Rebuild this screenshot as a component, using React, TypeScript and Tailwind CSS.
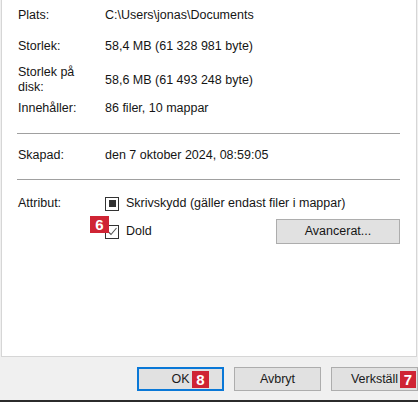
const rows = [
  { label: 'Plats:', value: 'C:\\Users\\jonas\\Documents' },
  { label: 'Storlek:', value: '58,4 MB (61 328 981 byte)' },
];

function Badge({ n, className }: { n: string; className: string }) {
  return (
    <span
      className={`absolute flex items-center justify-center bg-[#cf2434] text-white font-bold text-[15px] leading-none ${className}`}
    >
      {n}
    </span>
  );
}

function Button({ label, primary }: { label: string; primary?: boolean }) {
  return (
    <div
      className={`h-[24px] w-[87px] flex items-center justify-center bg-[#e1e1e1] text-[12.5px] text-[#1a1a1a] ${
        primary ? 'border-2 border-[#0a78d7]' : 'border border-[#adadad]'
      }`}
    >
      {label}
    </div>
  );
}

export default function App() {
  return (
    <div
      className="w-[418px] h-[402px] bg-[#f0f0f0] flex flex-col overflow-hidden text-[12.5px] leading-[15px] text-[#151515]"
      style={{ fontFamily: '"Liberation Sans", Arial, sans-serif' }}
    >
      {/* panel */}
      <div className="ml-[1px] w-[416px] h-[357px] shrink-0 bg-white border-x border-b border-[#d6d6d6] pl-[16px] pr-[16px] pt-[8px]">
        <div className="flex flex-col">
          {rows.map((r, i) => (
            <div key={r.label} className={`flex ${i > 0 ? 'mt-[16px]' : ''}`}>
              <div className="w-[87px] shrink-0">{r.label}</div>
              <div>{r.value}</div>
            </div>
          ))}
          <div className="flex items-center mt-[11px]">
            <div className="w-[87px] shrink-0">
              Storlek på
              <br />
              disk:
            </div>
            <div className="pt-[1px]">58,6 MB (61 493 248 byte)</div>
          </div>
          <div className="flex mt-[6px]">
            <div className="w-[87px] shrink-0">Innehåller:</div>
            <div>86 filer, 10 mappar</div>
          </div>
        </div>

        <div className="h-px bg-[#a0a0a0] mt-[17px] -ml-[1px]" />

        <div className="flex mt-[14px]">
          <div className="w-[87px] shrink-0">Skapad:</div>
          <div>den 7 oktober 2024, 08:59:05</div>
        </div>

        <div className="h-px bg-[#a0a0a0] mt-[16px] -ml-[1px]" />

        <div className="flex mt-[16px]">
          <div className="w-[87px] shrink-0">Attribut:</div>
          <div className="flex flex-col flex-1">
            <div className="flex items-center gap-[7px]">
              <div className="w-[14px] h-[14px] border-[1.5px] border-[#333] flex items-center justify-center">
                <div className="w-[7px] h-[7px] bg-[#333]" />
              </div>
              <span>Skrivskydd (gäller endast filer i mappar)</span>
            </div>
            <div className="flex items-center mt-[8px] relative">
              <div className="flex items-center gap-[7px] flex-1">
                <div className="w-[14px] h-[14px] border-[1.5px] border-[#333] flex items-center justify-center">
                  <svg width="11" height="11" viewBox="0 0 11 11">
                    <path d="M1.5 6 L4 8.5 L9.5 2" fill="none" stroke="#555" strokeWidth="1.1" />
                  </svg>
                </div>
                <span>Dold</span>
              </div>
              <div className="w-[124px] h-[25px] flex items-center justify-center bg-[#e1e1e1] border border-[#adadad]">
                Avancerat...
              </div>
              <Badge n="6" className="-left-[15px] -top-[3px] w-[19px] h-[17px]" />
            </div>
          </div>
        </div>
      </div>

      {/* buttons */}
      <div className="flex-1 flex items-center justify-end gap-[10px] pt-[1px] relative">
        <div className="relative">
          <Button label="OK" primary />
          <Badge n="8" className="left-[55px] top-[4px] w-[17px] h-[17px]" />
        </div>
        <Button label="Avbryt" />
        <div className="relative">
          <Button label="Verkställ" />
          <Badge n="7" className="left-[69px] top-[4px] w-[16px] h-[17px]" />
        </div>
      </div>
      <div className="h-[2px] bg-[#2b2b2b] shrink-0" />
    </div>
  );
}
